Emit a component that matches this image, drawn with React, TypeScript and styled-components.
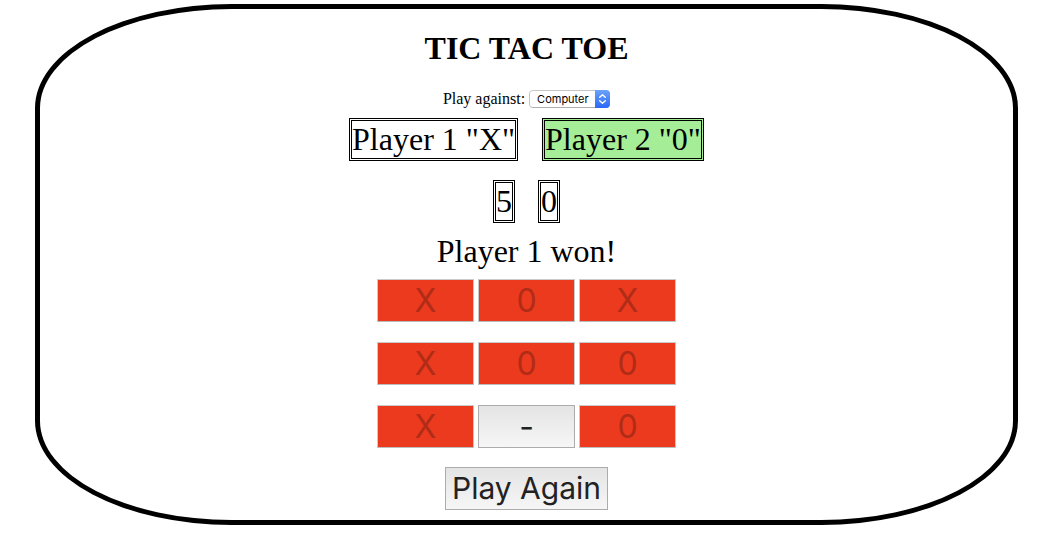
import React, { useState } from "react";
import styled, { createGlobalStyle } from "styled-components";

const GlobalStyle = createGlobalStyle`
  body {
    margin: 0;
    background: #fff;
    color: #000;
    font-family: "Liberation Serif", "Times New Roman", serif;
    font-size: 16px;
  }
`;

const Board = styled.main`
  box-sizing: border-box;
  display: flex;
  flex-direction: column;
  align-items: center;
  margin: 4px 25px 28px 35px;
  padding: 21px 10px 10px;
  border: 5px solid #000;
  border-radius: 20%;
`;

const Title = styled.h1`
  margin: 0 0 23px;
  font-size: 32px;
  line-height: 37px;
`;

const Opponent = styled.div`
  display: flex;
  align-items: center;
  gap: 4px;
  line-height: 18px;
  margin-bottom: 10px;
`;

const SelectBox = styled.span`
  position: relative;
  display: inline-flex;
  border-radius: 4px;
  overflow: hidden;
`;

const Select = styled.select`
  appearance: none;
  box-sizing: border-box;
  width: 81px;
  height: 18px;
  margin: 0;
  padding: 0 16px 0 7px;
  border: 1px solid #c6c6c6;
  border-bottom-color: #b0b0b0;
  border-radius: 4px;
  background: #fff;
  color: #000;
  font-family: Inter, sans-serif;
  font-size: 11px;
`;

const Stepper = styled.svg`
  position: absolute;
  top: 0;
  right: 0;
  pointer-events: none;
`;

const Pair = styled.div`
  display: flex;
  gap: ${({ $gap }: { $gap: number }) => $gap}px;
`;

const Players = styled(Pair)`
  margin-bottom: 19px;
`;

const Scores = styled(Pair)`
  margin-bottom: 10px;
`;

const Tag = styled.div<{ $active?: boolean }>`
  border: 3px double #000;
  background: ${({ $active }) => ($active ? "#a6ed97" : "transparent")};
  font-size: 32px;
  line-height: 37px;
`;

const Message = styled.p`
  margin: 0 0 9px;
  font-size: 32px;
  line-height: 37px;
`;

const Grid = styled.div`
  display: grid;
  grid-template-columns: repeat(3, 97px);
  gap: 20px 4px;
  margin-bottom: 19px;
`;

const Button = styled.button`
  box-sizing: border-box;
  height: 43px;
  margin: 0;
  padding: 0 6px;
  border: 1px solid #acacac;
  border-radius: 0;
  background: linear-gradient(#e4e4e4, #f6f6f6);
  color: #222;
  font-family: Inter, sans-serif;
  font-size: 30px;
  line-height: 41px;
`;

const Cell = styled(Button)`
  font-size: 32px;

  &:disabled {
    border-color: #cacaca;
    border-bottom-color: #bcbcbc;
    background: #eb3a1e;
    color: #b12c17;
  }
`;

const cells = ["X", "0", "X", "X", "0", "0", "X", "-", "0"];

export default function App() {
  const [opponent, setOpponent] = useState("Computer");
  return (
    <>
      <GlobalStyle />
      <Board>
        <Title>TIC TAC TOE</Title>
        <Opponent>
          <label htmlFor="opponent">Play against:</label>
          <SelectBox>
            <Select id="opponent" value={opponent} onChange={(e) => setOpponent(e.target.value)}>
              <option>Computer</option>
              <option>Human</option>
            </Select>
            <Stepper width="15" height="18" viewBox="0 0 15 18" aria-hidden="true">
              <defs>
                <linearGradient id="stepper" x1="0" y1="0" x2="0" y2="1">
                  <stop offset="0" stopColor="#6ba3fa" />
                  <stop offset="1" stopColor="#2a68f6" />
                </linearGradient>
              </defs>
              <path d="M0 0H15V18H0Z" fill="url(#stepper)" />
              <path
                d="M4.7 7.3 7.5 4.7 10.3 7.3M4.7 10.7 7.5 13.3 10.3 10.7"
                fill="none"
                stroke="#fff"
                strokeWidth="1.4"
                strokeLinecap="round"
                strokeLinejoin="round"
              />
            </Stepper>
          </SelectBox>
        </Opponent>
        <Players $gap={24}>
          <Tag>Player 1 "X"</Tag>
          <Tag $active>Player 2 "0"</Tag>
        </Players>
        <Scores $gap={23}>
          <Tag>5</Tag>
          <Tag>0</Tag>
        </Scores>
        <Message>Player 1 won!</Message>
        <Grid>
          {cells.map((mark, i) => (
            <Cell key={i} type="button" disabled={mark !== "-"}>
              {mark}
            </Cell>
          ))}
        </Grid>
        <Button type="button">Play Again</Button>
      </Board>
    </>
  );
}
